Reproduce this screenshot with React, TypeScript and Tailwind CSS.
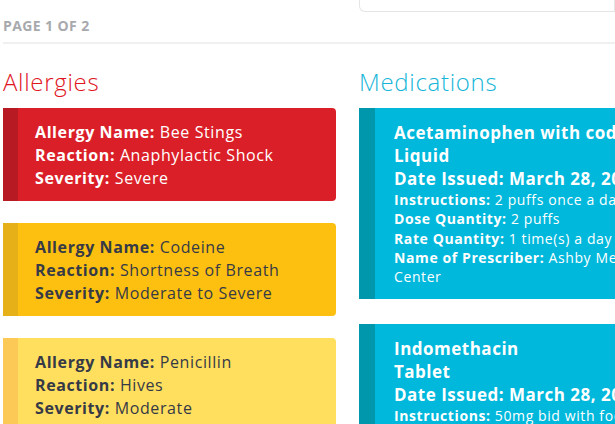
import React from 'react';

const ALLERGIES = [
  { name: 'Bee Stings', reaction: 'Anaphylactic Shock', severity: 'Severe', bg: 'bg-[#db1f28]', strip: 'bg-[#b71a22]', text: 'text-white' },
  { name: 'Codeine', reaction: 'Shortness of Breath', severity: 'Moderate to Severe', bg: 'bg-[#fdc010]', strip: 'bg-[#e6b118]', text: 'text-[#363a47]' },
  { name: 'Penicillin', reaction: 'Hives', severity: 'Moderate', bg: 'bg-[#ffdf5d]', strip: 'bg-[#fdc956]', text: 'text-[#363a47]' },
];

function Field({ label, value }: { label: string; value: string }) {
  return (
    <div className="whitespace-nowrap">
      <span className="font-bold">{label}:</span> {value}
    </div>
  );
}

function AllergyCard({ a }: { a: (typeof ALLERGIES)[number] }) {
  return (
    <div className={`flex rounded-r-[4px] overflow-hidden ${a.bg} ${a.text}`}>
      <div className={`w-[15px] shrink-0 ${a.strip}`} />
      <div className="pl-[17px] pt-[13px] pb-[11px] text-[16px] leading-[23px] tracking-[0.6px]">
        <Field label="Allergy Name" value={a.name} />
        <Field label="Reaction" value={a.reaction} />
        <Field label="Severity" value={a.severity} />
      </div>
    </div>
  );
}

function MedCard({ title, form, children }: { title: string; form: string; children?: React.ReactNode }) {
  return (
    <div className="flex bg-[#00b8dc] text-white">
      <div className="w-[16px] shrink-0 bg-[#0096ac]" />
      <div className="pl-[19px] pt-[13px] pb-[13px] whitespace-nowrap">
        <div className="text-[17px] leading-[23px] font-bold tracking-[0.5px]">
          <div>{title}</div>
          <div>{form}</div>
          <div>Date Issued: March 28, 2015</div>
        </div>
        <div className="text-[14px] leading-[19.25px] tracking-[0.6px]">{children}</div>
      </div>
    </div>
  );
}

export default function App() {
  return (
    <div className="w-[615px] h-[424px] overflow-hidden bg-white font-['Open_Sans',sans-serif]">
      <div className="flex">
        <div className="w-[359px] shrink-0" />
        <div className="w-[300px] h-[12px] border border-t-0 border-[#e5e5e5] rounded-bl-[6px]" />
      </div>
      <div className="pl-[3px]">
        <div className="mt-[6px] text-[14px] leading-[16px] font-bold tracking-[0.4px] text-[#a8a9ad]">PAGE 1 OF 2</div>
        <div className="mt-[8px] h-[2px] bg-[#f0f0f0]" />
        <div className="flex gap-[23px] mt-[24px]">
          <div className="w-[333px] shrink-0">
            <h2 className="text-[24px] leading-[28px] font-light tracking-[0.7px] text-[#e0141e] mb-[12px]">Allergies</h2>
            <div className="flex flex-col gap-[22px]">
              {ALLERGIES.map((a) => (
                <AllergyCard key={a.name} a={a} />
              ))}
            </div>
          </div>
          <div className="w-[333px] shrink-0">
            <h2 className="text-[24px] leading-[28px] font-light tracking-[0.7px] text-[#16b5d8] mb-[12px]">Medications</h2>
            <div className="flex flex-col gap-[25px]">
              <MedCard title="Acetaminophen with codeine" form="Liquid">
                <Field label="Instructions" value="2 puffs once a day" />
                <Field label="Dose Quantity" value="2 puffs" />
                <Field label="Rate Quantity" value="1 time(s) a day" />
                <div>
                  <span className="font-bold">Name of Prescriber:</span> Ashby Medical
                </div>
                <div>Center</div>
              </MedCard>
              <MedCard title="Indomethacin" form="Tablet">
                <Field label="Instructions" value="50mg bid with food" />
                <Field label="Dose Quantity" value="1 tablet" />
              </MedCard>
            </div>
          </div>
        </div>
      </div>
    </div>
  );
}
